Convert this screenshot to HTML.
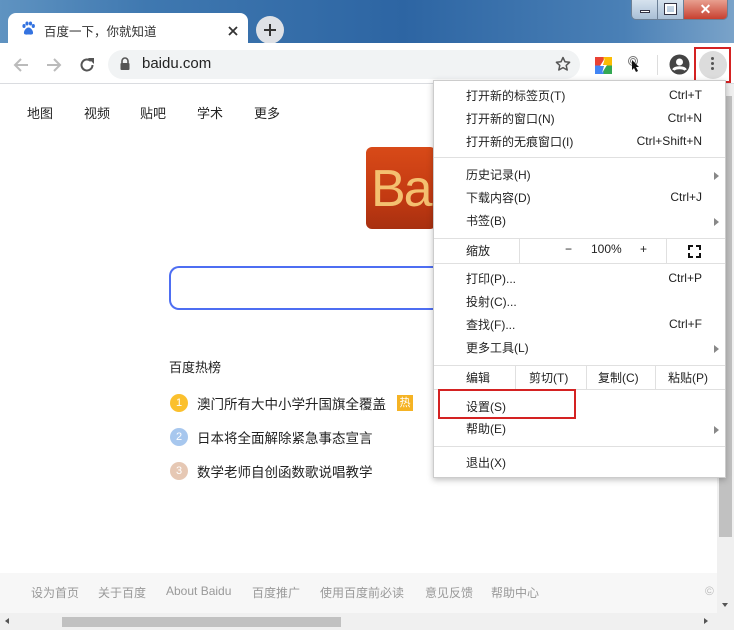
<!DOCTYPE html>
<html><head><meta charset="utf-8"><style>
*{margin:0;padding:0;box-sizing:border-box}
body{width:734px;height:630px;overflow:hidden;position:relative;background:#fff;font-family:"Liberation Sans","Noto Sans CJK SC",sans-serif;font-size:12px;color:#222}
.a{position:absolute}
.title{left:0;top:0;width:734px;height:43px;background:linear-gradient(90deg,#5f93c1 0%,#3f78b0 20%,#2d65a3 55%,#4a80b6 85%,#7aa3c9 100%)}
.tab{left:8px;top:13px;width:240px;height:31px;background:#fff;border-radius:8px 8px 0 0}
.menu{left:433px;top:80px;width:293px;height:398px;background:#fff;border:1px solid #ccc;box-shadow:0 2px 6px rgba(0,0,0,.25)}
.mi{position:absolute;left:32px;font-size:12px;color:#222;white-space:nowrap;margin-top:-2px}
.sc{position:absolute;right:23px;font-size:12px;color:#222;margin-top:-1px}
.sep{position:absolute;left:0;width:291px;height:1px;background:#e0e0e0}
.arr{position:absolute;right:6px;width:0;height:0;border-left:5px solid #888;border-top:4px solid transparent;border-bottom:4px solid transparent}
.nav{top:103px;font-size:13px;color:#222}
.hot{left:197px;font-size:13.5px;color:#222;margin-top:-2px}
.foot{top:584px;font-size:12px;color:#999}
</style></head><body>
<div class="a title"></div>
<div class="a" style="left:631px;top:0;width:97px;height:20px;border:1px solid #6b7f95;border-top:none;border-radius:0 0 5px 5px;overflow:hidden;display:flex">
<div style="width:26px;background:linear-gradient(#d6e2ee,#a9bfd6);border-right:1px solid #6b7f95;position:relative"><div class="a" style="left:8px;top:10px;width:10px;height:3px;background:#fff;border:1px solid #334"></div></div>
<div style="width:26px;background:linear-gradient(#d6e2ee,#a9bfd6);border-right:1px solid #6b7f95;position:relative"><div class="a" style="left:7px;top:4px;width:11px;height:10px;border:2px solid #fff;outline:1px solid #334"></div></div>
<div style="flex:1;background:linear-gradient(#e8a090,#c74030);color:#fff;font-weight:bold;font-size:14px;text-align:center;line-height:18px">✕</div>
</div>
<div class="a tab"></div>
<svg class="a" style="left:21px;top:21px" width="15" height="15" viewBox="0 0 15 15"><ellipse cx="3" cy="5" rx="1.6" ry="2" fill="#3473e0"/><ellipse cx="6" cy="2.5" rx="1.6" ry="2" fill="#3473e0"/><ellipse cx="9.5" cy="2.5" rx="1.6" ry="2" fill="#3473e0"/><ellipse cx="12.3" cy="5" rx="1.6" ry="2" fill="#3473e0"/><path d="M7.5 6.5C5 6.5 2.5 10 3 12.5 3.5 14 6 13.5 7.5 13.5 9 13.5 11.5 14 12 12.5 12.5 10 10 6.5 7.5 6.5Z" fill="#3473e0"/></svg>
<div class="a" style="left:44px;top:21px;font-size:12.5px;color:#333">百度一下，你就知道</div>
<svg class="a" style="left:228px;top:26px" width="10" height="10" viewBox="0 0 10 10"><path d="M1 1l8 8M9 1l-8 8" stroke="#333" stroke-width="1.8"/></svg>
<div class="a" style="left:256px;top:16px;width:28px;height:28px;border-radius:50%;background:#dee1e6"></div>
<svg class="a" style="left:263px;top:23px" width="14" height="14" viewBox="0 0 14 14"><path d="M7 1v12M1 7h12" stroke="#333" stroke-width="2"/></svg>
<div class="a" style="left:0;top:43px;width:734px;height:41px;background:#fff;border-bottom:1px solid #dadce0"></div>
<svg class="a" style="left:12px;top:56px" width="18" height="18" viewBox="0 0 18 18"><path d="M16 9H3M9 3L3 9l6 6" stroke="#bbb" stroke-width="2" fill="none"/></svg>
<svg class="a" style="left:45px;top:56px" width="18" height="18" viewBox="0 0 18 18"><path d="M2 9h13M9 3l6 6-6 6" stroke="#bbb" stroke-width="2" fill="none"/></svg>
<svg class="a" style="left:78px;top:56px" width="18" height="18" viewBox="0 0 18 18"><path d="M14.5 9A5.5 5.5 0 1 1 12.9 5.1" stroke="#555" stroke-width="2" fill="none"/><path d="M10 2h6v6z" fill="#555"/></svg>
<div class="a" style="left:108px;top:50px;width:472px;height:29px;border-radius:15px;background:#f1f3f4"></div>
<svg class="a" style="left:119px;top:57px" width="12" height="14" viewBox="0 0 12 14"><path d="M3 6V4a3 3 0 0 1 6 0v2" stroke="#555" stroke-width="1.6" fill="none"/><rect x="1.5" y="6" width="9" height="7" rx="1" fill="#555"/></svg>
<div class="a" style="left:142px;top:55px;font-size:15px;color:#222">baidu.com</div>
<svg class="a" style="left:555px;top:56px" width="16" height="16" viewBox="0 0 16 16"><path d="M8 1.5l2 4.3 4.6.5-3.4 3.1 1 4.6L8 11.6 3.8 14l1-4.6L1.4 6.3 6 5.8z" stroke="#555" stroke-width="1.5" fill="none" stroke-linejoin="round"/></svg>
<svg class="a" style="left:595px;top:57px" width="17" height="17" viewBox="0 0 17 17"><rect x="0" y="0" width="8.5" height="8.5" fill="#e94235"/><rect x="8.5" y="0" width="8.5" height="8.5" fill="#fbbc04"/><rect x="0" y="8.5" width="8.5" height="8.5" fill="#4285f4"/><rect x="8.5" y="8.5" width="8.5" height="8.5" fill="#34a853"/><path d="M10 1L5 9h4l-2 7 5-8H8z" fill="#fff"/></svg>
<svg class="a" style="left:627px;top:55px" width="14" height="20" viewBox="0 0 14 20"><circle cx="6" cy="6" r="4.5" stroke="#777" fill="none"/><circle cx="6" cy="6" r="2.5" stroke="#777" fill="none"/><path d="M5 5v10l2-2 2 4 2-1-2-4h3z" fill="#111"/></svg>
<div class="a" style="left:657px;top:55px;width:1px;height:20px;background:#ddd"></div>
<svg class="a" style="left:669px;top:54px" width="21" height="21" viewBox="0 0 21 21"><circle cx="10.5" cy="10.5" r="10" fill="#444"/><circle cx="10.5" cy="8" r="3.5" fill="#fff"/><path d="M4.5 16c1.5-3 10.5-3 12 0" stroke="#fff" stroke-width="3" fill="none"/></svg>
<div class="a" style="left:699px;top:51px;width:28px;height:28px;border-radius:50%;background:#dcdcdc"></div>
<div class="a" style="left:711px;top:57px;width:3px;height:3px;border-radius:50%;background:#555;box-shadow:0 5px 0 #555,0 10px 0 #555"></div>
<div class="a" style="left:694px;top:47px;width:37px;height:36px;border:2px solid #d42222"></div>
<div class="a nav" style="left:27px">地图</div>
<div class="a nav" style="left:84px">视频</div>
<div class="a nav" style="left:140px">贴吧</div>
<div class="a nav" style="left:197px">学术</div>
<div class="a nav" style="left:254px">更多</div>
<div class="a" style="left:366px;top:147px;width:70px;height:82px;border-radius:6px;background:linear-gradient(#d84a18,#c33a12 60%,#a83010);overflow:hidden"><div style="position:absolute;left:5px;top:12px;font-size:52px;color:#f4c070;letter-spacing:-2px">Ba</div></div>
<div class="a" style="left:169px;top:266px;width:290px;height:44px;border:2px solid #4e6ef2;border-right:none;border-radius:10px 0 0 10px"></div>
<div class="a" style="left:169px;top:357px;font-size:13px;color:#222">百度热榜</div>
<div class="a" style="left:170px;top:394px;width:18px;height:18px;border-radius:50%;background:#fbc02d;color:#fff;font-size:11px;text-align:center;line-height:18px">1</div>
<div class="a hot" style="top:395px">澳门所有大中小学升国旗全覆盖</div>
<div class="a" style="left:397px;top:395px;width:16px;height:16px;background:#f5b324;color:#fff;font-size:11px;text-align:center;line-height:16px">热</div>
<div class="a" style="left:170px;top:428px;width:18px;height:18px;border-radius:50%;background:#a7c7ee;color:#fff;font-size:11px;text-align:center;line-height:18px">2</div>
<div class="a hot" style="top:429px">日本将全面解除紧急事态宣言</div>
<div class="a" style="left:170px;top:462px;width:18px;height:18px;border-radius:50%;background:#e6c8b4;color:#fff;font-size:11px;text-align:center;line-height:18px">3</div>
<div class="a hot" style="top:463px">数学老师自创函数歌说唱教学</div>
<div class="a" style="left:0;top:573px;width:717px;height:40px;background:#f7f7f7"></div>
<div class="a foot" style="left:31px">设为首页</div>
<div class="a foot" style="left:98px">关于百度</div>
<div class="a foot" style="left:166px">About Baidu</div>
<div class="a foot" style="left:252px">百度推广</div>
<div class="a foot" style="left:320px">使用百度前必读</div>
<div class="a foot" style="left:425px">意见反馈</div>
<div class="a foot" style="left:491px">帮助中心</div>
<div class="a foot" style="left:705px;color:#bbb">©</div>
<div class="a" style="left:717px;top:84px;width:17px;height:546px;background:#f0f0f0"></div>
<div class="a" style="left:719px;top:96px;width:13px;height:441px;background:#c1c1c1"></div>
<div class="a" style="left:722px;top:603px;border-top:4px solid #555;border-left:3.5px solid transparent;border-right:3.5px solid transparent"></div>
<div class="a" style="left:0;top:613px;width:717px;height:17px;background:#f0f0f0"></div>
<div class="a" style="left:62px;top:617px;width:279px;height:10px;background:#c1c1c1"></div>
<div class="a" style="left:5px;top:618px;border-right:4px solid #555;border-top:3.5px solid transparent;border-bottom:3.5px solid transparent"></div>
<div class="a" style="left:704px;top:618px;border-left:4px solid #555;border-top:3.5px solid transparent;border-bottom:3.5px solid transparent"></div>
<div class="a menu">
<div class="mi" style="top:8px">打开新的标签页(T)</div><div class="sc" style="top:8px">Ctrl+T</div>
<div class="mi" style="top:31px">打开新的窗口(N)</div><div class="sc" style="top:31px">Ctrl+N</div>
<div class="mi" style="top:54px">打开新的无痕窗口(I)</div><div class="sc" style="top:54px">Ctrl+Shift+N</div>
<div class="sep" style="top:76px"></div>
<div class="mi" style="top:87px">历史记录(H)</div><div class="arr" style="top:91px"></div>
<div class="mi" style="top:110px">下载内容(D)</div><div class="sc" style="top:110px">Ctrl+J</div>
<div class="mi" style="top:133px">书签(B)</div><div class="arr" style="top:137px"></div>
<div class="sep" style="top:157px"></div>
<div class="mi" style="top:163px">缩放</div>
<div style="position:absolute;left:85px;top:157px;width:1px;height:25px;background:#e0e0e0"></div>
<div class="mi" style="left:131px;top:163px">−</div>
<div class="mi" style="left:157px;top:163px">100%</div>
<div class="mi" style="left:206px;top:163px">+</div>
<div style="position:absolute;left:232px;top:157px;width:1px;height:25px;background:#e0e0e0"></div>
<svg style="position:absolute;left:254px;top:164px" width="13" height="13" viewBox="0 0 13 13"><path d="M1 5V1h4M8 1h4v4M12 8v4H8M5 12H1V8" stroke="#111" stroke-width="2" fill="none"/></svg>
<div class="sep" style="top:182px"></div>
<div class="mi" style="top:191px">打印(P)...</div><div class="sc" style="top:191px">Ctrl+P</div>
<div class="mi" style="top:214px">投射(C)...</div>
<div class="mi" style="top:237px">查找(F)...</div><div class="sc" style="top:237px">Ctrl+F</div>
<div class="mi" style="top:260px">更多工具(L)</div><div class="arr" style="top:264px"></div>
<div class="sep" style="top:284px"></div>
<div class="mi" style="top:290px">编辑</div>
<div style="position:absolute;left:81px;top:284px;width:1px;height:24px;background:#e0e0e0"></div>
<div class="mi" style="left:95px;top:290px">剪切(T)</div>
<div style="position:absolute;left:152px;top:284px;width:1px;height:24px;background:#e0e0e0"></div>
<div class="mi" style="left:164px;top:290px">复制(C)</div>
<div style="position:absolute;left:221px;top:284px;width:1px;height:24px;background:#e0e0e0"></div>
<div class="mi" style="left:234px;top:290px">粘贴(P)</div>
<div class="sep" style="top:308px"></div>
<div class="mi" style="top:319px">设置(S)</div>
<div class="mi" style="top:341px">帮助(E)</div><div class="arr" style="top:345px"></div>
<div class="sep" style="top:365px"></div>
<div class="mi" style="top:375px">退出(X)</div>
</div>
<div class="a" style="left:438px;top:389px;width:138px;height:30px;border:2px solid #d42222"></div>
</body></html>
